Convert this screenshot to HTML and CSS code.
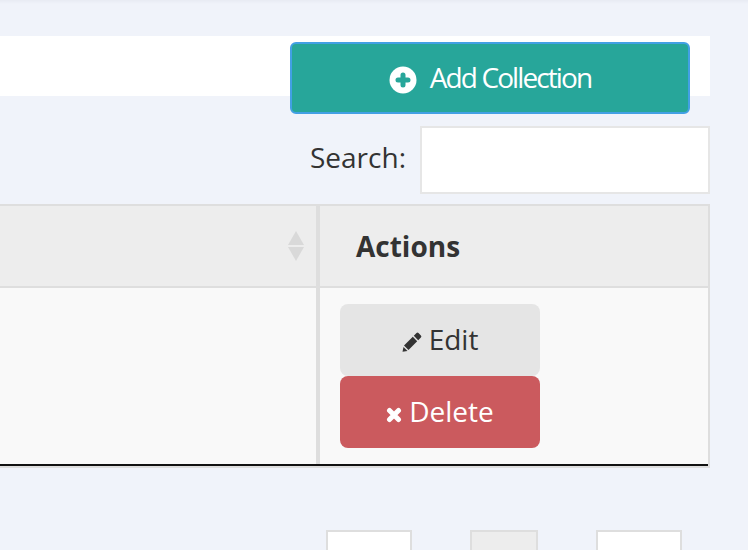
FILE: index.html
```html
<!DOCTYPE html>
<html lang="en">
<head>
  <meta charset="UTF-8">
  <title>Collections</title>
  <link rel="stylesheet" href="styles.css">
</head>
<body>
  <div class="container">
    <div class="top-bar">
      <a class="btn-add" href="#">
        <svg class="icon-plus" viewBox="0 0 28 28" width="28" height="28">
          <circle cx="14" cy="14" r="13.5" fill="#fff"/>
          <path d="M14 9v10M9 14h10" stroke="#27a69a" stroke-width="5" stroke-linecap="round"/>
        </svg>
        <span>Add Collection</span>
      </a>
    </div>

    <div class="search-row">
      <label for="search">Search:</label>
      <input id="search" type="text">
    </div>

    <div class="table">
      <div class="row head">
        <div class="cell main">
          <svg class="sort" viewBox="0 0 16 30" width="16" height="30">
            <path d="M8 0l8 14H0z" fill="#d9d9d9"/>
            <path d="M0 16h16L8 30z" fill="#d9d9d9"/>
          </svg>
        </div>
        <div class="cell actions">Actions</div>
      </div>
      <div class="row body">
        <div class="cell main"></div>
        <div class="cell buttons">
          <a class="btn btn-edit" href="#">
            <svg class="icon-edit" viewBox="0 0 20 20" width="20" height="20">
              <path d="M11.800 3.800l2.700-2.700q1-1 2 0l2.400 2.400q1 1 0 2l-2.700 2.700zM10.800 4.800l4.400 4.400L6.500 18 2 13.500zM1.500 15l4 4-5 .8z" fill="#333"/>
            </svg>
            Edit
          </a>
          <a class="btn btn-delete" href="#">
            <svg class="icon-delete" viewBox="0 0 16 16" width="16" height="16">
              <path d="M3.500 3.500l9 9M12.500 3.500l-9 9" stroke="#fff" stroke-width="5" stroke-linecap="round"/>
            </svg>
            Delete
          </a>
        </div>
      </div>
    </div>

    <div class="pager">
      <span class="page prev"></span>
      <span class="page current"></span>
      <span class="page next"></span>
    </div>
  </div>
</body>
</html>
```

FILE: styles.css
```css
html, body {
  margin: 0;
  height: 100%;
  overflow: hidden;
}

body {
  background: linear-gradient(#e8ebf3, #f0f3fa 4px);
  font-family: "Open Sans", "Noto Sans", sans-serif;
  color: #333;
}

.container {
  width: 710px;
  padding-top: 36px;
}

.top-bar {
  display: flex;
  justify-content: flex-end;
  align-items: flex-start;
  height: 60px;
  padding-right: 20px;
  background: #fff;
}

.btn-add {
  display: flex;
  align-items: center;
  justify-content: center;
  gap: 13px;
  box-sizing: border-box;
  width: 400px;
  height: 72px;
  padding-bottom: 2px;
  margin-top: 6px;
  background: #27a69a;
  border: 2px solid #42a0e4;
  border-radius: 6px;
  color: #fff;
  font-size: 28px;
  letter-spacing: -1.9px;
  text-decoration: none;
}

.icon-plus {
  margin-top: 6px;
}

.search-row {
  display: flex;
  justify-content: flex-end;
  align-items: center;
  gap: 14px;
  margin-top: 30px;
  font-size: 28px;
}

.search-row label {
  padding-bottom: 6px;
}

.search-row input {
  box-sizing: border-box;
  width: 290px;
  height: 68px;
  background: #fff;
  border: 2px solid #e6e6e6;
}

.table {
  box-sizing: border-box;
  margin-top: 10px;
  border: 2px solid #dedede;
  border-left: 0;
}

.row {
  display: flex;
}

.head {
  height: 80px;
  background: #ededed;
  border-bottom: 2px solid #dedede;
}

.body {
  height: 176px;
  background: #f9f9f9;
  border-bottom: 2px solid #111;
}

.cell.main {
  display: flex;
  justify-content: flex-end;
  align-items: center;
  box-sizing: border-box;
  width: 320px;
  padding-right: 12px;
  border-right: 4px solid #dedede;
}

.actions {
  padding: 21px 0 0 36px;
  font-size: 28px;
  font-weight: 700;
  line-height: 38px;
}

.buttons {
  padding: 16px 0 0 20px;
}

.btn {
  display: flex;
  align-items: center;
  justify-content: center;
  gap: 7px;
  box-sizing: border-box;
  width: 200px;
  height: 72px;
  padding-bottom: 2px;
  border-radius: 8px;
  font-size: 28px;
  text-decoration: none;
}

.icon-edit {
  margin-top: 6px;
}

.icon-delete {
  margin-top: 8px;
}

.btn-edit {
  background: #e5e5e5;
  color: #333;
}

.btn-delete {
  background: #cb5a5e;
  color: #fff;
}

.pager {
  display: flex;
  height: 20px;
  margin-top: 62px;
  padding-left: 326px;
  overflow: hidden;
}

.page {
  flex: none;
  box-sizing: border-box;
  width: 86px;
  height: 60px;
  background: #fff;
  border: 2px solid #dedede;
}

.page.current {
  width: 68px;
  margin: 0 58px;
  background: #ededed;
}
```
